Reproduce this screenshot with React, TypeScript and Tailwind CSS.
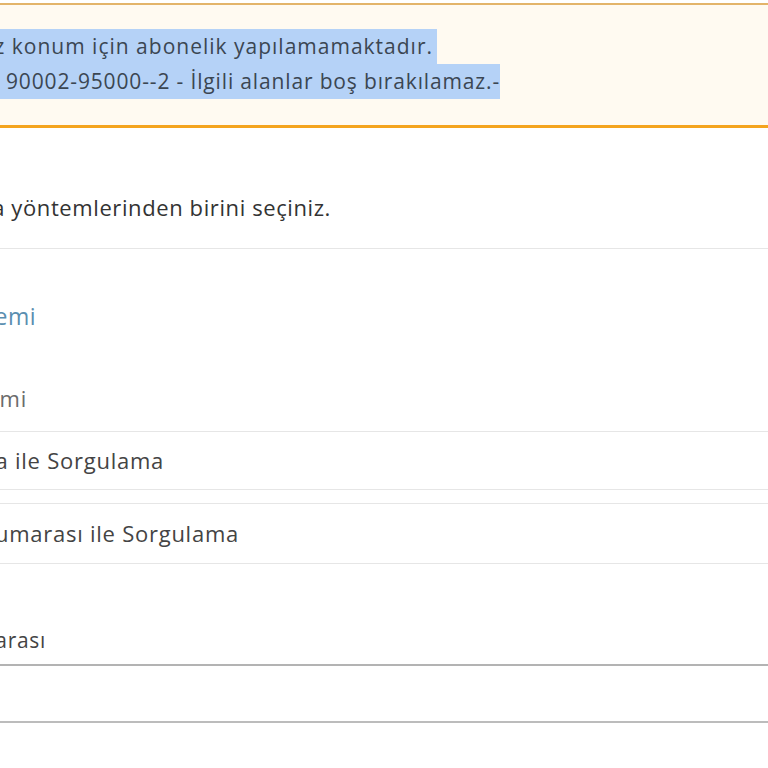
import React from "react";

// each row ends at a fixed x and spills off the left edge, like the cropped page
function Row({ end, children }: { end: string; children: React.ReactNode }) {
    return <div className={`flex justify-end ${end}`}>{children}</div>;
}

export default function App() {
    return (
        <div className="w-[768px] h-[768px] overflow-hidden bg-white font-['Open_Sans',sans-serif] pt-[3px]">
            <div className="h-[125px] border-t-2 border-t-[#e3b46a] border-b-[3px] border-b-[#f4a41f] bg-[#fffaf1] pt-[24px] text-[21px] leading-[35px] text-[#3b4652]">
                <Row end="w-[437px]">
                    <span className="whitespace-nowrap bg-[#b5d2f7] pr-[4px] tracking-[1px]">Seçtiğiniz konum için abonelik yapılamamaktadır.</span>
                </Row>
                <Row end="w-[500px]">
                    <span className="whitespace-nowrap bg-[#b5d2f7] tracking-[0.85px]">Hata Kodu: 90002-95000--2 - İlgili alanlar boş bırakılamaz.-</span>
                </Row>
            </div>

            <div className="h-[121px] border-b border-[#e6e6e6] pt-[64px] text-[22px] tracking-[0.6px] leading-[30px] text-[#333]">
                <Row end="w-[331px]">
                    <span className="whitespace-nowrap">Lütfen sorgulama yöntemlerinden birini seçiniz.</span>
                </Row>
            </div>

            <div className="pt-[52px] text-[23px] tracking-[0.5px] leading-[30px] text-[#5a8eb0]">
                <Row end="w-[36px]">
                    <span className="whitespace-nowrap">Sorgulama Yöntemi</span>
                </Row>
            </div>
            <div className="mt-[52px] h-[48px] text-[22px] tracking-[0.8px] leading-[30px] text-[#6b6b6b]">
                <Row end="w-[27px]">
                    <span className="whitespace-nowrap">Sorgulama Yöntemi</span>
                </Row>
            </div>

            <div className="h-[59px] border-y border-[#e6e6e6] flex items-center text-[22px] tracking-[0.75px] text-[#444]">
                <Row end="w-[164px]">
                    <span className="whitespace-nowrap">Harita ile Sorgulama</span>
                </Row>
            </div>
            <div className="mt-[13px] h-[61px] border-y border-[#e6e6e6] flex items-center text-[22px] tracking-[0.75px] text-[#444]">
                <Row end="w-[239px]">
                    <span className="whitespace-nowrap">Tesisat Numarası ile Sorgulama</span>
                </Row>
            </div>

            <div className="h-[102px] border-b-2 border-[#b3b3b3] flex items-end pb-[11px] text-[21px] tracking-[0.7px] leading-[26px] text-[#444]">
                <Row end="w-[46px]">
                    <span className="whitespace-nowrap">Tesisat Numarası</span>
                </Row>
            </div>
            <div className="h-[57px] border-b-2 border-[#bcbcbc]" />
        </div>
    );
}
